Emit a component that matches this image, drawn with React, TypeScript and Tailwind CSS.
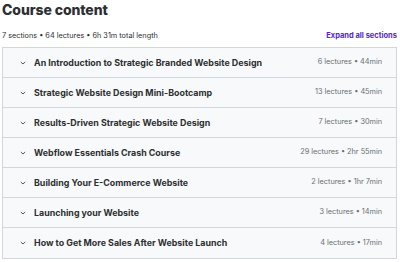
import React from 'react';

const sections = [
  { title: 'An Introduction to Strategic Branded Website Design', meta: '6 lectures • 44min' },
  { title: 'Strategic Website Design Mini-Bootcamp', meta: '13 lectures • 45min' },
  { title: 'Results-Driven Strategic Website Design', meta: '7 lectures • 30min' },
  { title: 'Webflow Essentials Crash Course', meta: '29 lectures • 2hr 55min' },
  { title: 'Building Your E-Commerce Website', meta: '2 lectures • 1hr 7min' },
  { title: 'Launching your Website', meta: '3 lectures • 14min' },
  { title: 'How to Get More Sales After Website Launch', meta: '4 lectures • 17min' },
];

function Chevron() {
  return (
    <svg width="8" height="8" viewBox="0 0 8 8" className="shrink-0 text-[#2d2f31]">
      <path d="M1.8 3 L4 5 L6.2 3" fill="none" stroke="currentColor" strokeWidth="0.8" />
    </svg>
  );
}

export default function App() {
  return (
    <div className="w-[400px] h-[262px] bg-white px-[2px] text-[#2d2f31]" style={{ fontFamily: 'Inter, "Noto Sans", sans-serif' }}>
      <h2 className="text-[14px] font-extrabold leading-[20px] tracking-[-0.1px]">Course content</h2>
      <div className="flex items-end justify-between mt-[11px] mb-[6px] pr-[1px]">
        <span className="text-[7.3px] leading-[10px] text-[#2d2f31]">7 sections • 64 lectures • 6h 31m total length</span>
        <span className="text-[7.5px] leading-[10px] font-bold text-[#5624d0]">Expand all sections</span>
      </div>
      <div className="border border-[#d1d7dc] w-[395px]">
        {sections.map((s, i) => (
          <div
            key={s.title}
            className={`flex items-center h-[30px] bg-[#f7f9fa] pl-[16px] pr-[14px] ${i < sections.length - 1 ? 'border-b border-[#d1d7dc]' : ''}`}
          >
            <Chevron />
            <span className="ml-[7px] text-[8.9px] font-bold flex-1 truncate">{s.title}</span>
            <span className="text-[7.3px] text-[#6a6f73]">{s.meta}</span>
          </div>
        ))}
      </div>
    </div>
  );
}
